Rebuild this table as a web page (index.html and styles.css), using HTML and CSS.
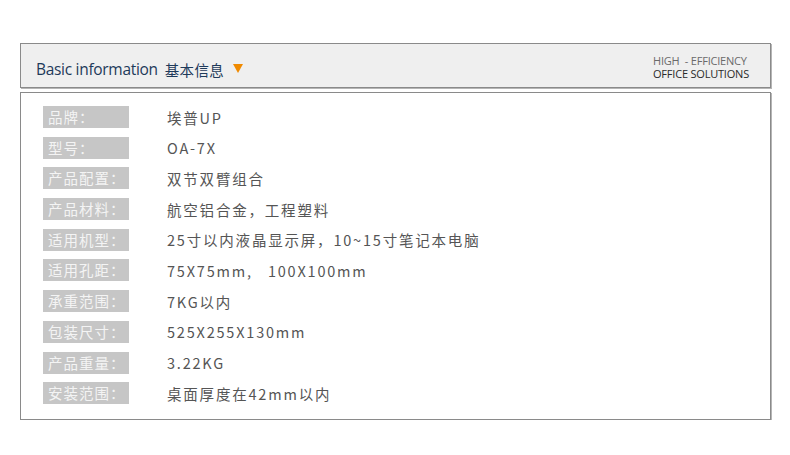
FILE: index.html
```html
<!DOCTYPE html>
<html>
<head>
<meta charset="utf-8">
<link rel="stylesheet" href="styles.css">
</head>
<body>
<div class="wrap">
  <div class="head">
    <div class="title">
      <span class="en">Basic information</span>
      <span class="cn">基本信息</span>
      <span class="tri"></span>
    </div>
    <div class="slogan">
      <div class="s1">HIGH&nbsp; - EFFICIENCY</div>
      <div class="s2">OFFICE SOLUTIONS</div>
    </div>
  </div>
  <div class="body">
    <div class="row"><span class="lab">品牌：</span><span class="val">埃普UP</span></div>
    <div class="row"><span class="lab">型号：</span><span class="val">OA-7X</span></div>
    <div class="row"><span class="lab">产品配置：</span><span class="val">双节双臂组合</span></div>
    <div class="row"><span class="lab">产品材料：</span><span class="val">航空铝合金，工程塑料</span></div>
    <div class="row"><span class="lab">适用机型：</span><span class="val">25寸以内液晶显示屏，10~15寸笔记本电脑</span></div>
    <div class="row"><span class="lab">适用孔距：</span><span class="val">75X75mm,&nbsp;&nbsp; 100X100mm</span></div>
    <div class="row"><span class="lab">承重范围：</span><span class="val">7KG以内</span></div>
    <div class="row"><span class="lab">包装尺寸：</span><span class="val">525X255X130mm</span></div>
    <div class="row"><span class="lab">产品重量：</span><span class="val">3.22KG</span></div>
    <div class="row"><span class="lab">安装范围：</span><span class="val">桌面厚度在42mm以内</span></div>
  </div>
</div>
</body>
</html>
```
FILE: styles.css
```css
html, body { margin: 0; padding: 0; background: #fff; }
body { font-family: "Open Sans", "Noto Sans CJK SC", sans-serif; }
.wrap { padding: 43px 19px 0 20px; width: 751px; }
.head {
  height: 43px;
  background: #efefef;
  border: 1px solid #8a8a8a;
  box-shadow: 1px 1px 0 #b5b5b5;
  display: flex;
  align-items: center;
  justify-content: space-between;
  padding: 0 21px 0 15px;
}
.title { display: flex; align-items: center; padding-top: 7px; }
.en { font-family: "Open Sans", sans-serif; font-size: 15.5px; color: #1e3a5a; letter-spacing: -0.3px; }
.cn { font-family: "Noto Sans CJK SC", sans-serif; font-size: 14.5px; color: #1e3a5a; margin-left: 7px; letter-spacing: 0.3px; }
.tri {
  width: 0; height: 0;
  border-left: 5px solid transparent;
  border-right: 5px solid transparent;
  border-top: 9px solid #f08a00;
  margin-left: 9px;
  margin-top: -2px;
}
.slogan { font-family: "Open Sans", sans-serif; font-size: 11px; line-height: 12.5px; text-align: left; padding-top: 4px; letter-spacing: -0.2px; }
.s1 { color: #6a6a6a; }
.s2 { color: #2a2a2a; }
.body {
  margin-top: 4px;
  height: 328px;
  border: 1px solid #8a8a8a;
  box-shadow: 1px 1px 0 #b5b5b5;
  padding: 13px 0 0 22px;
  box-sizing: border-box;
  display: flex;
  flex-direction: column;
  gap: 8.7px;
}
.row { display: flex; align-items: center; height: 22px; }
.lab {
  width: 86px; height: 22px;
  background: #c6c6c6;
  color: #f4f4f4;
  font-family: "Noto Sans CJK SC", sans-serif;
  font-size: 14.5px;
  line-height: 22px;
  padding-left: 5px;
  box-sizing: border-box;
  letter-spacing: 1px;
}
.val {
  margin-left: 38px;
  color: #555;
  font-family: "Noto Sans CJK SC", sans-serif;
  font-size: 14.5px;
  letter-spacing: 1.8px;
}
```
